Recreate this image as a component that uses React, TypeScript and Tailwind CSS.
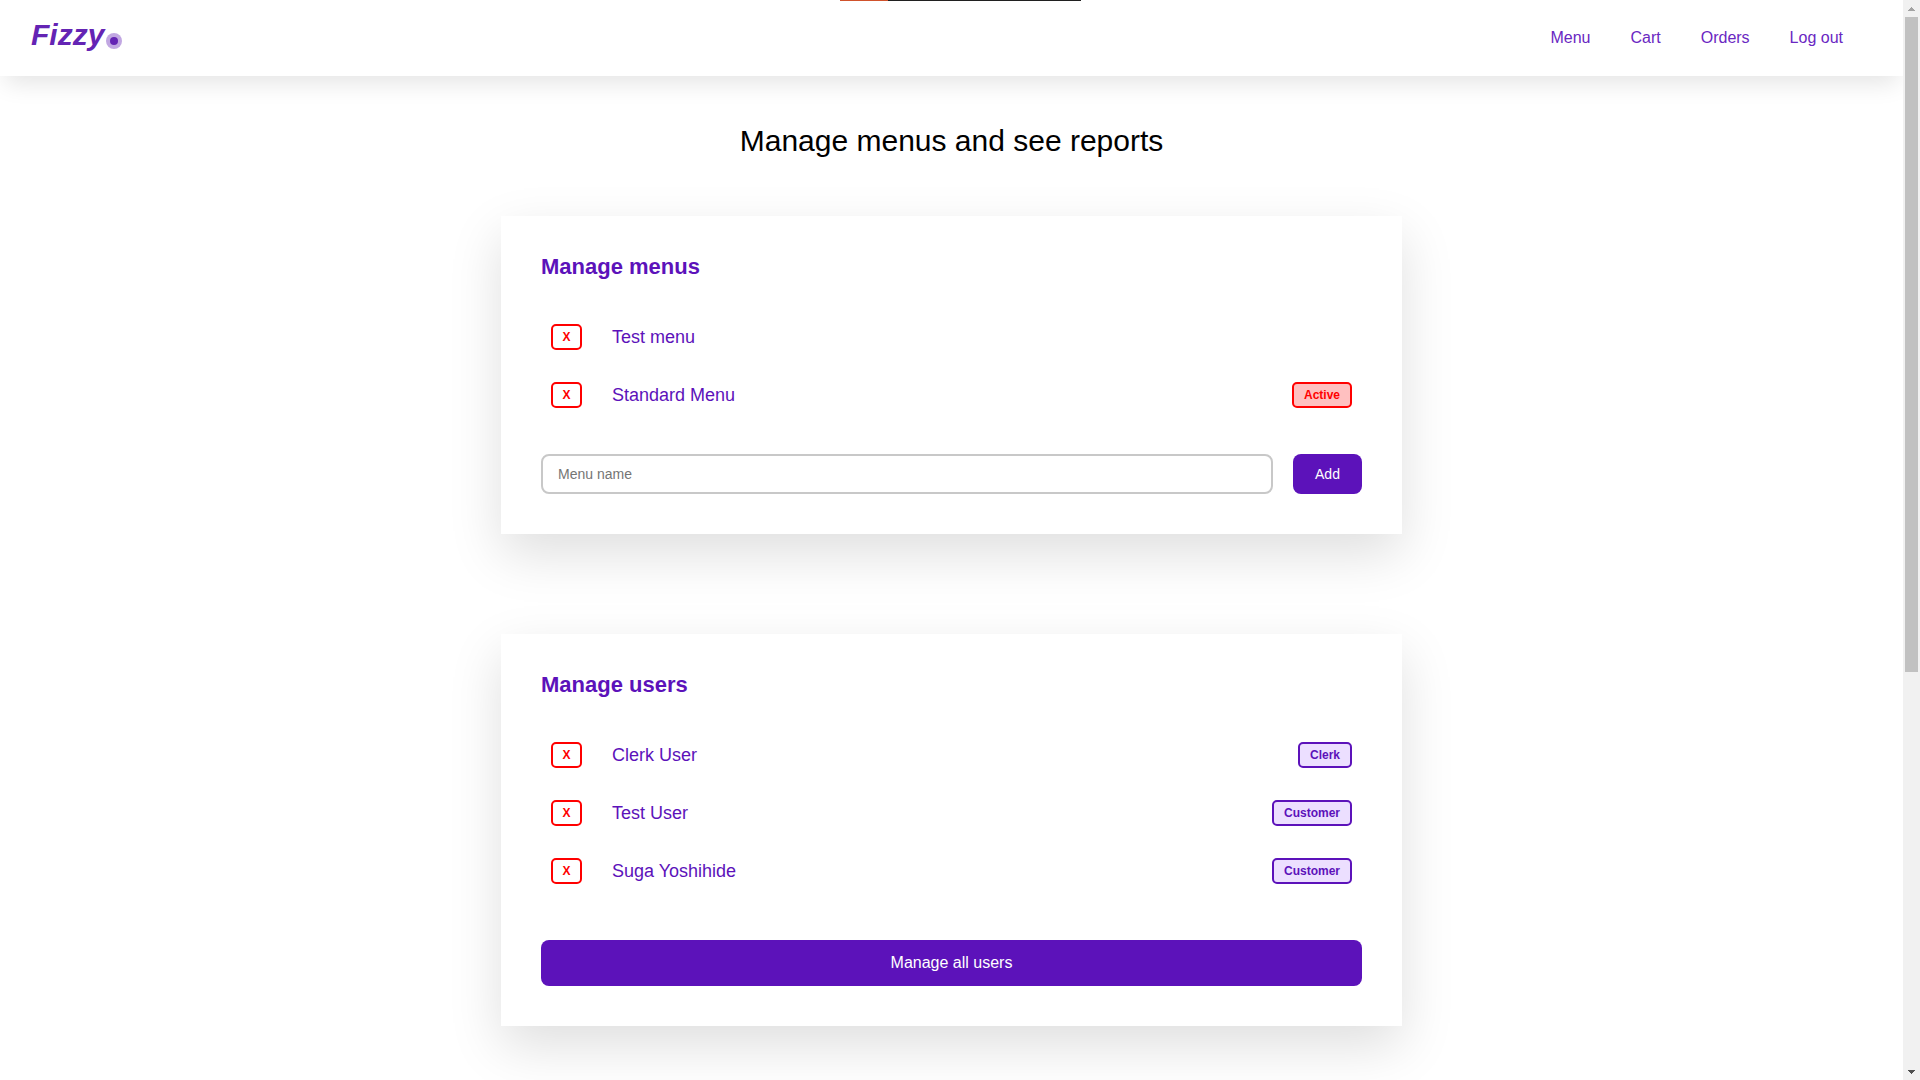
import React from "react";

const navItems = ["Menu", "Cart", "Orders", "Log out"];

type Tone = "red" | "purple";

interface Entry {
  name: string;
  badge?: string;
  tone?: Tone;
}

const menus: Entry[] = [
  { name: "Test menu" },
  { name: "Standard Menu", badge: "Active", tone: "red" },
];

const users: Entry[] = [
  { name: "Clerk User", badge: "Clerk", tone: "purple" },
  { name: "Test User", badge: "Customer", tone: "purple" },
  { name: "Suga Yoshihide", badge: "Customer", tone: "purple" },
];

const badgeTones: Record<Tone, string> = {
  red: "border-[#ff0000] bg-[#ffc0c0] text-[#ff0000]",
  purple: "border-[#5c12ba] bg-[#ecdfff] text-[#5c12ba]",
};

function Header() {
  return (
    <header className="flex h-[76px] items-start justify-between bg-white pl-[31px] pr-[60px] shadow-[0_12px_24px_-5px_rgba(0,0,0,0.11)]">
      <div className="flex pt-[17px] text-[#6424b4]">
        <span className="text-[30px] leading-[36px] font-bold italic">Fizzy</span>
        <span className="mt-4 ml-[2px] flex size-4 items-center justify-center rounded-full bg-[#c1a7e2]">
          <span className="size-2 rounded-full bg-[#6424b4]" />
        </span>
      </div>
      <nav className="flex gap-10 pt-[26px] text-base leading-6 text-[#6a27c2]">
        {navItems.map((item) => (
          <a key={item}>{item}</a>
        ))}
      </nav>
    </header>
  );
}

function Row({ name, badge, tone = "purple" }: Entry) {
  return (
    <li className="flex h-[58px] items-center px-[10px]">
      <button className="h-[26px] w-[31px] rounded-[5px] border-2 border-[#ff0000] text-xs leading-none font-bold text-[#ff0000]">
        X
      </button>
      <span className="ml-[30px] flex-1 text-lg leading-6 text-[#5c12ba]">{name}</span>
      {badge && (
        <span
          className={`flex h-[26px] items-center rounded-[5px] border-2 px-[10px] text-xs leading-none font-bold ${badgeTones[tone]}`}
        >
          {badge}
        </span>
      )}
    </li>
  );
}

function Card({ title, entries, children }: { title: string; entries: Entry[]; children: React.ReactNode }) {
  return (
    <section className="w-[901px] bg-white p-10 shadow-[0_20px_50px_rgba(0,0,0,0.13)]">
      <h2 className="mb-[27px] h-[25px] text-[22px] leading-[22px] font-bold text-[#5c12ba]">{title}</h2>
      <ul>
        {entries.map((e) => (
          <Row key={e.name} {...e} />
        ))}
      </ul>
      {children}
    </section>
  );
}

function ScrollBar() {
  return (
    <div className="flex w-[17px] flex-none flex-col items-center bg-[#f1f1f1]">
      <div className="flex h-[17px] items-center justify-center">
        <svg width="7" height="4" viewBox="0 0 7 4" shapeRendering="crispEdges" className="mt-[1px]">
          <path d="M3 0h1v1h1v1h1v1h1v1H0V3h1V2h1V1h1z" fill="#a3a3a3" />
        </svg>
      </div>
      <div className="h-[655px] w-[13px] bg-[#c1c1c1]" />
      <div className="mt-auto flex h-[17px] items-center justify-center">
        <svg width="7" height="4" viewBox="0 0 7 4" shapeRendering="crispEdges">
          <path d="M0 0h7v1H6v1H5v1H4v1H3V3H2V2H1V1H0z" fill="#505050" />
        </svg>
      </div>
    </div>
  );
}

export default function App() {
  return (
    <div className="relative flex h-[1080px] w-[1920px] overflow-hidden bg-white font-['Liberation_Sans',Arial,sans-serif]">
      <div className="h-[1080px] flex-1 overflow-hidden">
        <Header />
        <main className="flex flex-col items-center">
          <h1 className="mt-[47px] text-[30px] leading-[36px] text-black">Manage menus and see reports</h1>
          <div className="mt-[57px] flex flex-col gap-[100px]">
            <Card title="Manage menus" entries={menus}>
              <div className="mt-[30px] flex gap-5">
                <input
                  placeholder="Menu name"
                  className="h-10 flex-1 rounded-lg border-2 border-[#c8c8c8] bg-white px-[15px] text-sm placeholder:text-[#757575]"
                />
                <button className="h-10 w-[69px] rounded-lg bg-[#5c12ba] text-sm text-white">Add</button>
              </div>
            </Card>
            <Card title="Manage users" entries={users}>
              <button className="mt-[40px] block h-[46px] w-full rounded-lg bg-[#5c12ba] text-base text-white">
                Manage all users
              </button>
            </Card>
          </div>
        </main>
      </div>
      <ScrollBar />
      <div className="absolute top-0 left-[840px] flex h-px w-[241px] bg-[#202020]">
        <div className="w-12 bg-[#d0522c]" />
      </div>
    </div>
  );
}
